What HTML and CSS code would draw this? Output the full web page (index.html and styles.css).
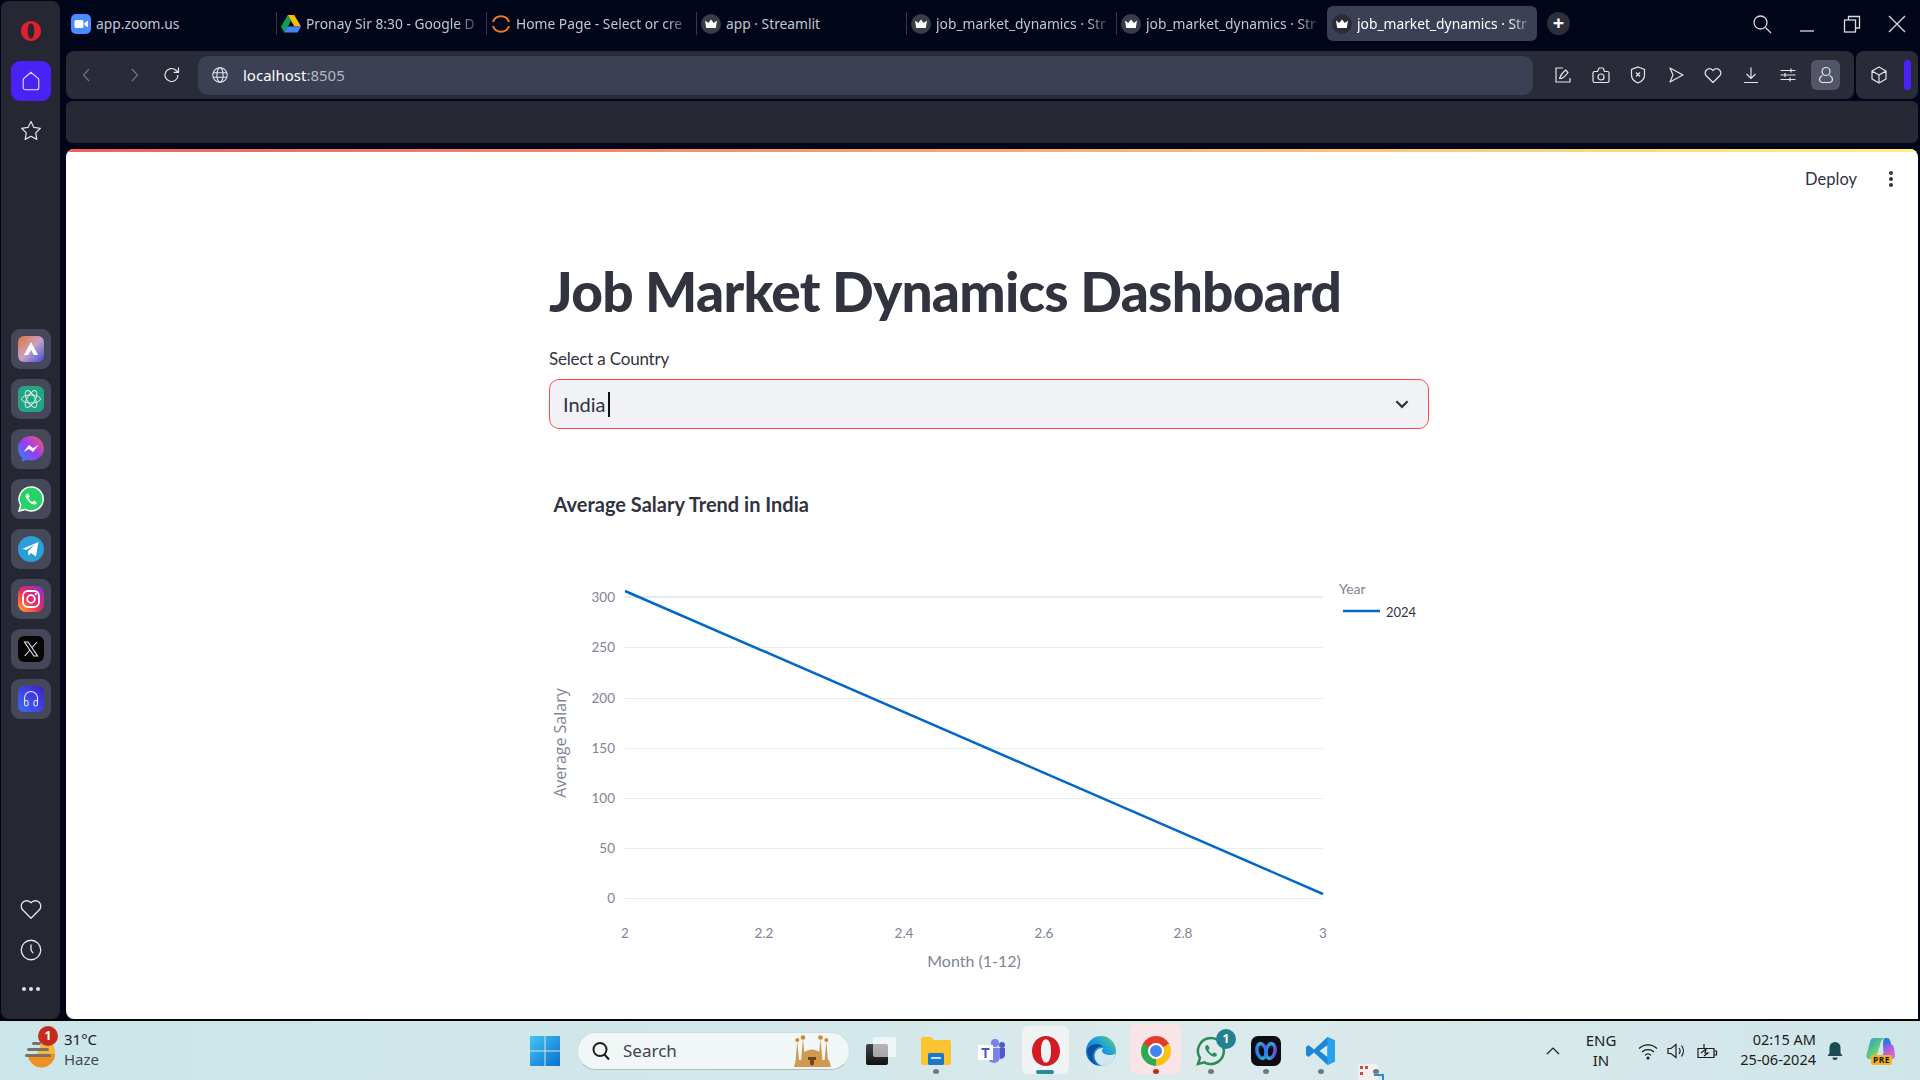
FILE: index.html
```html
<!DOCTYPE html>
<html lang="en">
<head>
    <meta charset="UTF-8">
    <title>job_market_dynamics · Streamlit</title>
    <link rel="stylesheet" href="styles.css">
</head>
<body>
<div class="desktop">
    <div class="window">
        <!-- browser sidebar -->
        <aside class="sidebar">
            <svg class="opera-logo" viewBox="0 0 20 20"><path fill="#e0202f" fill-rule="evenodd" d="M10 0c5.600 0 10 4.400 10 10s-4.400 10-10 10S0 15.600 0 10 4.400 0 10 0zm0 2.600c-2.200 0-3.300 3.300-3.300 7.400s1.100 7.400 3.300 7.400 3.300-3.300 3.300-7.400S12.200 2.600 10 2.600z"/></svg>
            <div class="side-home">
                <svg viewBox="0 0 24 24" class="ico-22"><path d="M12 2.500 20 9.500a2 2 0 0 1 .5 1.400V19a2.500 2.500 0 0 1-2.500 2.500H6A2.500 2.500 0 0 1 3.500 19v-8.100A2 2 0 0 1 4 9.500z"/></svg>
            </div>
            <div class="side-star">
                <svg viewBox="0 0 24 24" class="ico-24"><path d="m12 2.500 2.900 5.900 6.500.9-4.700 4.600 1.100 6.500-5.800-3.100-5.800 3.100 1.100-6.500-4.700-4.600 6.500-.9z" stroke-linejoin="round"/></svg>
            </div>
            <div class="side-apps">
                <div class="app-btn"><svg viewBox="0 0 26 26">
                    <defs><linearGradient id="aria" x1="0" y1="0" x2="1" y2="1"><stop offset="0" stop-color="#e8712f"/><stop offset=".5" stop-color="#c8a2c8"/><stop offset="1" stop-color="#3f4be0"/></linearGradient></defs>
                    <rect width="26" height="26" rx="6" fill="url(#aria)"/><path d="M13 6 20 19h-4l-3-5-3 5H6z" fill="#fff"/></svg></div>
                <div class="app-btn"><svg viewBox="0 0 26 26">
                    <rect width="26" height="26" rx="6" fill="#23a585"/>
                    <g fill="none" stroke="#dff5ee" stroke-width=".9"><ellipse cx="13" cy="13" rx="9.500" ry="4"/><ellipse cx="13" cy="13" rx="9.500" ry="4" transform="rotate(60 13 13)"/><ellipse cx="13" cy="13" rx="9.500" ry="4" transform="rotate(120 13 13)"/></g></svg></div>
                <div class="app-btn"><svg viewBox="0 0 26 26">
                    <defs><linearGradient id="msgr" x1="0" y1="1" x2="1" y2="0"><stop offset="0" stop-color="#1f8bf5"/><stop offset=".5" stop-color="#9a3cf0"/><stop offset="1" stop-color="#f9586b"/></linearGradient></defs>
                    <path d="M13 0C5.700 0 0 5.300 0 12.500c0 3.700 1.500 7 4.100 9.300V26l4-2.200c1.500.4 3.200.7 4.900.7 7.300 0 13-5.300 13-12S20.300 0 13 0z" fill="url(#msgr)"/>
                    <path d="m5.500 16 5.500-7 4 3 5.500-3-5.500 7-4-3z" fill="#fff"/></svg></div>
                <div class="app-btn"><svg viewBox="0 0 26 26">
                    <path d="M13 1a12 12 0 0 0-10.300 18L1 25l6.200-1.600A12 12 0 1 0 13 1z" fill="#25d366" stroke="#fff" stroke-width="1.500"/>
                    <path d="M9.300 7.500c-.8.300-1.800 1.500-1.600 3 .3 2.400 4.800 7.500 8 8 1.600.2 2.900-.8 3.100-1.800.2-.7-2.400-2.200-3-2-.5.200-.8 1.200-1.400 1.200-1.200 0-3.600-2.400-3.800-3.700 0-.6 1-1 1.100-1.500.1-.6-1.500-3.400-2.400-3.200z" fill="#fff"/></svg></div>
                <div class="app-btn"><svg viewBox="0 0 26 26">
                    <circle cx="13" cy="13" r="13" fill="#2a9fd8"/><path d="M4.500 12.800 20.500 6l-2.600 14.500-4.900-3.400-2.500 2.300-.5-4.300 7-6.500-8.800 5.300z" fill="#fff"/></svg></div>
                <div class="app-btn"><svg viewBox="0 0 26 26">
                    <defs><linearGradient id="insta" x1="0" y1="1" x2="1" y2="0"><stop offset="0" stop-color="#fdb32b"/><stop offset=".45" stop-color="#ee2a5b"/><stop offset="1" stop-color="#8a2be2"/></linearGradient></defs>
                    <rect width="26" height="26" rx="8" fill="url(#insta)"/><g fill="none" stroke="#fff" stroke-width="1.800"><rect x="5" y="5" width="16" height="16" rx="5"/><circle cx="13" cy="13" r="3.800"/></g><circle cx="17.800" cy="8.200" r="1.100" fill="#fff"/></svg></div>
                <div class="app-btn"><svg viewBox="0 0 26 26">
                    <rect width="26" height="26" rx="6" fill="#060607"/><path d="M6.500 6h3.600l9.400 14h-3.600zM19 6l-5.300 6M12 14l-5.300 6" fill="none" stroke="#e8e8e8" stroke-width="1.100"/></svg></div>
                <div class="app-btn"><svg viewBox="0 0 26 26">
                    <defs><linearGradient id="music" x1="0" y1="1" x2="1" y2="0"><stop offset="0" stop-color="#3e6cf5"/><stop offset="1" stop-color="#3a1fd0"/></linearGradient></defs>
                    <rect width="26" height="26" rx="6" fill="url(#music)"/><g fill="none" stroke="#e4e6ff" stroke-width="1.100"><path d="M6.500 16v-4a6.500 6.500 0 0 1 13 0v4"/><rect x="6.500" y="14.500" width="3.600" height="5.500" rx="1.800"/><rect x="15.900" y="14.500" width="3.600" height="5.500" rx="1.800"/></g></svg></div>
            </div>
            <div class="side-bottom">
                <svg viewBox="0 0 24 24" class="ico-26"><path d="M12 20.500 4.500 13a5 5 0 0 1 0-7.200 5 5 0 0 1 7 0l.5.500.5-.5a5 5 0 0 1 7 0 5 5 0 0 1 0 7.200z" stroke-linejoin="round"/></svg>
                <svg viewBox="0 0 24 24" class="ico-26"><circle cx="12" cy="12" r="9"/><path d="M12 7v5l2 3"/></svg>
                <div class="side-dots"><i></i><i></i><i></i></div>
            </div>
        </aside>

        <div class="browser">
            <div class="tabstrip">
                <div class="tab first">
                    <svg class="fav" viewBox="0 0 20 20"><rect width="20" height="20" rx="5" fill="#4a8cff"/><rect x="3.500" y="6" width="9" height="8" rx="1.500" fill="#fff"/><path d="m13.500 9 3.500-2.500v7L13.500 11z" fill="#fff"/></svg>
                    <span class="tab-title">app.zoom.us</span>
                </div>
                <div class="tab">
                    <svg class="fav" viewBox="0 0 20 18"><path d="M6.700 0h6.600L20 11.500h-6.600z" fill="#fbbc04"/><path d="M6.700 0 0 11.800l3.300 5.700L10 6z" fill="#0f9d58"/><path d="M3.300 17.500h13.400l3.300-6H6.600z" fill="#4285f4"/></svg>
                    <span class="tab-title fade">Pronay Sir 8:30 - Google D</span>
                </div>
                <div class="tab">
                    <svg class="fav" viewBox="0 0 20 20" fill="none" stroke="#f07a24" stroke-width="2"><path d="M2 8a8.500 8.500 0 0 1 16 0"/><path d="M2 12a8.500 8.500 0 0 0 16 0"/></svg>
                    <span class="tab-title fade">Home Page - Select or cre</span>
                </div>
                <div class="tab">
                    <svg class="fav" viewBox="0 0 20 20"><circle cx="10" cy="10" r="10" fill="#3a3d47"/><path d="m4 6.500 3.200 2.500L10 5.500 12.800 9 16 6.500l-1.200 7.500H5.200z" fill="#fff"/></svg>
                    <span class="tab-title">app · Streamlit</span>
                </div>
                <div class="tab">
                    <svg class="fav" viewBox="0 0 20 20"><circle cx="10" cy="10" r="10" fill="#3a3d47"/><path d="m4 6.500 3.200 2.500L10 5.500 12.800 9 16 6.500l-1.200 7.500H5.200z" fill="#fff"/></svg>
                    <span class="tab-title fade">job_market_dynamics · Str</span>
                </div>
                <div class="tab">
                    <svg class="fav" viewBox="0 0 20 20"><circle cx="10" cy="10" r="10" fill="#3a3d47"/><path d="m4 6.500 3.200 2.500L10 5.500 12.800 9 16 6.500l-1.200 7.500H5.200z" fill="#fff"/></svg>
                    <span class="tab-title fade">job_market_dynamics · Str</span>
                </div>
                <div class="tab active">
                    <svg class="fav" viewBox="0 0 20 20"><circle cx="10" cy="10" r="10" fill="#2a2d38"/><path d="m4 6.500 3.200 2.500L10 5.500 12.800 9 16 6.500l-1.200 7.500H5.200z" fill="#fff"/></svg>
                    <span class="tab-title fade">job_market_dynamics · Str</span>
                </div>
                <div class="new-tab">+</div>
                <div class="win-controls">
                    <svg viewBox="0 0 20 20" class="win-search"><circle cx="8.500" cy="8.500" r="6.500"/><path d="m13.500 13.500 5.500 5.500"/></svg>
                    <svg viewBox="0 0 20 20" class="win-btn"><path d="M3 17h14"/></svg>
                    <svg viewBox="0 0 20 20" class="win-btn"><rect x="2.500" y="6" width="11" height="12"/><path d="M6.500 6V2.500H17.500V14H13.500"/></svg>
                    <svg viewBox="0 0 20 20" class="win-btn"><path d="m2 2 16 16M18 2 2 18"/></svg>
                </div>
            </div>

            <div class="toolbar-row">
                <div class="toolbar">
                    <div class="nav-btn"><svg viewBox="0 0 20 20" class="ico-dim"><path d="M12 4 6.500 10l5.500 6"/></svg></div>
                    <div class="nav-btn forward"><svg viewBox="0 0 20 20" class="ico-dim"><path d="m8 4 5.500 6L8 16"/></svg></div>
                    <div class="reload"><svg viewBox="0 0 20 20" class="ico-20"><path d="M16 10a6.500 6.500 0 1 1-2-4.700l2 1.900"/><path d="M16.500 2.500v4.800h-4.800" stroke-linejoin="round"/></svg></div>
                    <div class="address">
                        <svg viewBox="0 0 20 20" class="ico-18 globe"><circle cx="10" cy="10" r="8"/><ellipse cx="10" cy="10" rx="3.500" ry="8"/><path d="M2.500 7.500h15M2.500 12.500h15"/></svg>
                        <span class="host">localhost</span><span class="port">:8505</span>
                    </div>
                    <div class="tools">
                        <div class="tool"><svg viewBox="0 0 20 20" class="ico-20"><path d="M10 3H3v14h14v-4M6.500 13.500c1-3 3-6 6-8.500l2.500 2.500c-2 3-4 5-6.500 6z" stroke-linejoin="round"/></svg></div>
                        <div class="tool"><svg viewBox="0 0 20 20" class="ico-20"><path d="M3.500 6.500h3l1.500-3.500h4l1.500 3.500h3A1.500 1.500 0 0 1 18 8v8a1.500 1.500 0 0 1-1.500 1.500h-13A1.500 1.500 0 0 1 2 16V8a1.500 1.500 0 0 1 1.500-1.500z"/><circle cx="10" cy="12" r="3"/></svg></div>
                        <div class="tool"><svg viewBox="0 0 20 20" class="ico-20"><path d="M10 2 16.500 4.500V10c0 3.500-2.500 6.500-6.500 8-4-1.500-6.500-4.500-6.500-8V4.500z"/><path d="m8 7.500 4 4M12 7.500l-4 4"/></svg></div>
                        <div class="tool"><svg viewBox="0 0 20 20" class="ico-20"><path d="M4 3 17 10 4 17l3-7z" stroke-linejoin="round"/></svg></div>
                        <div class="tool"><svg viewBox="0 0 20 20" class="ico-20"><path d="M10 17.500 3.500 11a4 4 0 0 1 0-6 4 4 0 0 1 6 0l.5.500.5-.5a4 4 0 0 1 6 0 4 4 0 0 1 0 6z" stroke-linejoin="round"/></svg></div>
                        <div class="tool"><svg viewBox="0 0 20 20" class="ico-20"><path d="M10 2.500V13M5.500 9 10 13.500 14.500 9M3 17.500h14"/></svg></div>
                        <div class="tool"><svg viewBox="0 0 20 20" class="ico-20"><path d="M2.500 5.500h15M2.500 10h15M2.500 14.500h15M13 3.500v4M7 8v4M12 12.500v4"/></svg></div>
                        <div class="profile"><svg viewBox="0 0 20 20" class="ico-20"><circle cx="10" cy="6.500" r="4"/><path d="M6.500 10.500c-2 1-3 2.500-3 4s1.300 3 3 3h7c1.700 0 3-1.500 3-3s-1-3-3-4"/></svg></div>
                    </div>
                </div>
                <div class="ext-box">
                    <svg viewBox="0 0 20 20" class="ico-20"><path d="M10 2 17 6v8l-7 4-7-4V6zM3 6l7 4 7-4M10 10v8" stroke-linejoin="round"/></svg>
                    <div class="ext-bar"></div>
                </div>
            </div>

            <div class="bookmarks"></div>

            <!-- the streamlit page -->
            <main class="page">
                <div class="page-deco"></div>
                <div class="page-head">
                    <span class="deploy">Deploy</span>
                    <div class="kebab"><i></i><i></i><i></i></div>
                </div>
                <div class="block">
                    <h1 class="title">Job Market Dynamics Dashboard</h1>
                    <label class="field-label">Select a Country</label>
                    <div class="select">
                        <span class="select-value">India</span><span class="caret"></span>
                        <svg class="select-arrow" viewBox="0 0 16 16"><path d="m3 5.500 5 5 5-5"/></svg>
                    </div>
                    <svg class="chart" viewBox="549 490 880 490">
                        <text class="chart-title" x="553.500" y="512">Average Salary Trend in India</text>
                        <g class="grid">
                            <path class="grid-top" d="M625 597H1323"/>
                            <path d="M625 647.500H1323M625 698.500H1323M625 748.500H1323M625 798.500H1323M625 848.500H1323M625 898.500H1323"/>
                        </g>
                        <path class="series" d="M625 591 1323 894"/>
                        <g class="ticks y-ticks">
                            <text x="615" y="602">300</text>
                            <text x="615" y="652">250</text>
                            <text x="615" y="703">200</text>
                            <text x="615" y="753">150</text>
                            <text x="615" y="803">100</text>
                            <text x="615" y="853">50</text>
                            <text x="615" y="903">0</text>
                        </g>
                        <g class="ticks x-ticks">
                            <text x="625" y="938">2</text>
                            <text x="764" y="938">2.2</text>
                            <text x="904" y="938">2.4</text>
                            <text x="1044" y="938">2.6</text>
                            <text x="1183" y="938">2.8</text>
                            <text x="1323" y="938">3</text>
                        </g>
                        <text class="axis-x" x="974" y="967">Month (1-12)</text>
                        <text class="axis-y" transform="translate(566 743) rotate(-90)">Average Salary</text>
                        <text class="legend-title" x="1339" y="594">Year</text>
                        <path class="legend-line" d="M1343 611H1380"/>
                        <text class="legend-text" x="1386" y="617">2024</text>
                    </svg>
                </div>
            </main>
        </div>
    </div>

    <!-- windows taskbar -->
    <footer class="taskbar">
        <div class="weather">
            <div class="weather-icon">
                <svg viewBox="0 0 30 34" width="30" height="34"><path d="M3 20h27a13.500 13.500 0 0 1-27 0z" fill="#ef8f22"/><path d="M18 6a12 12 0 0 1 12 14H12z" fill="#f5b63a"/><g fill="#75726a"><rect x="7" y="8" width="9" height="3" rx="1.500"/><rect x="2" y="14" width="22" height="3" rx="1.500"/><rect x="0" y="20" width="26" height="3" rx="1.500"/></g></svg>
                <span class="weather-badge">1</span>
            </div>
            <div class="weather-text"><div>31°C</div><div class="weather-sub">Haze</div></div>
        </div>
        <div class="tb-item">
            <svg viewBox="0 0 30 30" width="30" height="30"><defs><linearGradient id="win" x1="0" y1="0" x2="1" y2="1"><stop offset="0" stop-color="#43c5f5"/><stop offset="1" stop-color="#0a6fd0"/></linearGradient></defs><path d="M0 0h14.500v14.500H0zM15.500 0H30v14.500H15.500zM0 15.500h14.500V30H0zM15.500 15.500H30V30H15.500z" fill="url(#win)"/></svg>
        </div>
        <div class="search">
            <svg viewBox="0 0 20 20" width="20" height="20" class="search-q"><circle cx="9" cy="8.500" r="6.500"/><path d="m13.500 13.500 4.500 5"/></svg>
            <span class="search-text">Search</span>
            <svg class="search-pic" viewBox="0 0 37 32" width="37" height="32"><g fill="#cf9a50"><path d="M1 32 3.300 6 5.600 32zM6.500 32 9 3l2.500 29zM24 32l2.500-29L29 32zM30 32l2.300-26L34.600 32z"/><path d="M10 32V17q8-5 16 0v15zM0 32l2-7h33l2 7z"/></g><g fill="#c98a3a"><circle cx="3.300" cy="5" r="2"/><circle cx="9" cy="2.500" r="2.300"/><circle cx="26.500" cy="2.500" r="2.300"/><circle cx="32.300" cy="5" r="2"/></g><path d="M14 22h8v3h-8z" fill="#6b4420"/><ellipse cx="18" cy="27" rx="2" ry="3.500" fill="#6b4420"/></svg>
        </div>
        <div class="tb-item taskview"><div class="tv-front"></div><div class="tv-back"></div></div>
        <div class="tb-item"><svg viewBox="0 0 30 28" width="30" height="28"><path d="M0 2a2 2 0 0 1 2-2h8l3 3h15a2 2 0 0 1 2 2v21a2 2 0 0 1-2 2H2a2 2 0 0 1-2-2z" fill="#fcc42f"/><rect x="7" y="16" width="16" height="12" rx="1.500" fill="#1d78c9"/><rect x="10" y="20" width="10" height="2" fill="#bfe0f7"/></svg><i class="pip"></i></div>
        <div class="tb-item"><svg viewBox="0 0 28 26" width="28" height="26"><circle cx="18" cy="5" r="4" fill="#7b83eb"/><circle cx="25" cy="7" r="3" fill="#5059c9"/><path d="M11 10h12v9a6 6 0 0 1-12 0z" fill="#7b83eb"/><path d="M23 10h5v7a4 4 0 0 1-5 3.800z" fill="#5059c9"/><rect x="1" y="7" width="15" height="15" fill="#fff"/><path d="M4.500 10h8v2h-3v8h-2v-8h-3z" fill="#4b53bc"/></svg></div>
        <div class="tb-item tile-open"><svg viewBox="0 0 20 20" width="28" height="30" preserveAspectRatio="none"><path fill="#d41a26" fill-rule="evenodd" d="M10 0c5.600 0 10 4.400 10 10s-4.400 10-10 10S0 15.600 0 10 4.400 0 10 0zm0 2.200c-2.400 0-3.600 3.400-3.600 7.800s1.200 7.800 3.600 7.800 3.600-3.400 3.600-7.800S12.400 2.200 10 2.200z"/></svg><i class="pip-bar"></i></div>
        <div class="tb-item"><svg viewBox="0 0 30 30" width="30" height="30"><defs><linearGradient id="edge" x1="0" y1="1" x2="1" y2="0"><stop offset="0" stop-color="#0c5fb8"/><stop offset=".6" stop-color="#1d9ce0"/><stop offset="1" stop-color="#5fd97a"/></linearGradient></defs><circle cx="15" cy="15" r="15" fill="url(#edge)"/><path d="M29.500 17c-1 1.500-3 2-5.500 2-4 0-8-1.500-8-4.500 0-1 .5-2 1.500-2.500-5-.5-9 3-9 8 0 4 2 7 6 9.500 3 .5 6 0 9-2 3-2 5.500-5.500 6-10.500z" fill="#dcebf0" opacity=".95"/><path d="M12 29.500C7 26 6 22 7 18c1-5 5-8 10-7.500C12 6 5 8 1.500 13 .3 20 5 28 12 29.500z" fill="#0b4f9e"/></svg></div>
        <div class="tb-item tile-pink"><div class="chrome"><div class="chrome-eye"></div></div><i class="pip red"></i></div>
        <div class="tb-item">
            <svg viewBox="0 0 30 30" width="30" height="30"><path d="M15 2a13 13 0 0 0-11 20L2 28l6.400-1.700A13 13 0 1 0 15 2z" fill="none" stroke="#2e8b57" stroke-width="2.500"/><path d="M11 9c-1 .3-2 1.500-1.800 3.200.3 2.600 5.200 8 8.600 8.500 1.700.2 3-.8 3.200-2 .2-.7-2.500-2.300-3.200-2.100-.5.200-.8 1.200-1.400 1.200-1.300 0-3.800-2.500-4-4 0-.6 1-1 1.200-1.600C13.700 11.600 12 8.800 11 9z" fill="#2e8b57"/></svg>
            <span class="wa-badge">1</span><i class="pip"></i>
        </div>
        <div class="tb-item"><svg viewBox="0 0 30 30" width="30" height="30"><defs><linearGradient id="wave" x1="0" y1="0" x2="1" y2="0"><stop offset="0" stop-color="#2a7af0"/><stop offset=".5" stop-color="#22b8c8"/><stop offset="1" stop-color="#6a4be8"/></linearGradient></defs><rect width="30" height="30" rx="7" fill="#0d0d12"/><g fill="none" stroke="url(#wave)" stroke-width="3.500"><ellipse cx="10.500" cy="15" rx="4.500" ry="7.500" transform="rotate(-12 10.500 15)"/><ellipse cx="19.500" cy="15" rx="4.500" ry="7.500" transform="rotate(12 19.500 15)"/></g></svg><i class="pip"></i></div>
        <div class="tb-item"><svg viewBox="0 0 30 30" width="30" height="30"><path d="M21.500 1 29 4.500v21L21.500 29 8 16.500 2.500 21 0 19V11l2.500-2L8 13.500zm0 8L13.500 15l8 6z" fill="#1a86d8"/><path d="M21.500 1 29 4.500v21L21.500 29z" fill="#27a3ee"/></svg><i class="pip"></i></div>
        <div class="tb-item tb-extra"><svg viewBox="0 0 30 17" width="30" height="17"><rect x="1" y="1" width="20" height="16" rx="2" fill="#f3f1ee"/><g fill="#cf4a3a"><rect x="3" y="3" width="3" height="3"/><rect x="8" y="3" width="3" height="3"/><rect x="3" y="9" width="3" height="3"/></g><path d="M17 12h9v5" fill="none" stroke="#2a8ad4" stroke-width="2"/></svg><i class="pip"></i></div>

        <div class="tray">
            <div class="tray-chev"><svg viewBox="0 0 14 10" width="14" height="10"><path d="M1 8l6-6 6 6"/></svg></div>
            <div class="tray-lang"><div>ENG</div><div>IN</div></div>
            <div class="tray-ico wifi"><svg viewBox="0 0 20 18" width="20" height="18"><path d="M1 6.500a13 13 0 0 1 18 0M4 10a9 9 0 0 1 12 0M7 13.300a4.500 4.500 0 0 1 6 0"/><circle cx="10" cy="16" r="1" fill="#1c1c1c"/></svg></div>
            <div class="tray-ico speaker"><svg viewBox="0 0 20 18" width="20" height="18"><path d="M2 6.500h3L10 2.500v13L5 11.500H2zM13 6a5 5 0 0 1 0 6M15.500 3.500a9 9 0 0 1 0 11"/></svg></div>
            <div class="tray-ico battery"><svg viewBox="0 0 22 18" width="22" height="18"><path d="M2 6.500h16v9H2zM18 9h2.500v4H18M8 2v5M5 11l5-4-1 4h3l-4 3"/></svg></div>
            <div class="tray-clock"><div>02:15 AM</div><div>25-06-2024</div></div>
            <div class="tray-bell"><svg viewBox="0 0 16 20" width="16" height="20"><path d="M8 1a5.500 5.500 0 0 1 5.500 5.500V12l2 3H.5l2-3V6.500A5.500 5.500 0 0 1 8 1zM5.500 16.500h5a2.500 2.500 0 0 1-5 0z" fill="#1c4a55"/></svg></div>
            <div class="tray-copilot">
                <svg viewBox="0 0 29 28" width="29" height="28"><defs><linearGradient id="cop-l" x1="0" y1="0" x2="1" y2="1"><stop offset="0" stop-color="#2d8fe8"/><stop offset=".5" stop-color="#5ccb7e"/><stop offset="1" stop-color="#f2d34a"/></linearGradient><linearGradient id="cop-r" x1="0" y1="0" x2="1" y2="1"><stop offset="0" stop-color="#2f6fe0"/><stop offset=".5" stop-color="#b35ee0"/><stop offset="1" stop-color="#ef6fb4"/></linearGradient></defs><path d="M8 1h11c-3 1-4 3-5 7l-3 10c-1 3-2 4-6 4H3c-2 0-3-2-2.500-4L4 5c.6-2.500 2-4 4-4z" fill="url(#cop-l)"/><path d="M17 7h7c2 0 3.500 1.500 4 4l1 7c.3 2-1 4-3 4H13c3-1 3.500-3 4.500-6z" fill="url(#cop-r)"/><path d="M19 1h2c2 0 3 1.500 3.500 4l.5 2h-8c0-3 .5-5 2-6z" fill="#2a7ae0"/></svg>
                <span class="pre">PRE</span>
            </div>
        </div>
    </footer>
</div>
</body>
</html>
```

FILE: styles.css
```css
* {
    box-sizing: border-box;
}
html, body {
    margin: 0;
    padding: 0;
}
body {
    width: 1920px;
    height: 1080px;
    overflow: hidden;
    font-family: "Noto Sans", sans-serif;
}
.desktop {
    display: flex;
    flex-direction: column;
    height: 1080px;
}
.window {
    display: flex;
    height: 1021px;
    padding-right: 2px;
    background: #02061a;
    border-bottom: 2px solid #000;
}

/* icon defaults */
svg {
    display: block;
    flex: none;
}
.ico-26, .ico-24, .ico-22, .ico-20, .ico-18, .ico-dim {
    fill: none;
    stroke: #e4e6ec;
    stroke-width: 1.2;
}
.ico-26 { width: 26px; height: 26px; }
.ico-24 { width: 24px; height: 24px; }
.ico-22 { width: 22px; height: 22px; }
.ico-20 { width: 20px; height: 20px; }
.ico-18 { width: 18px; height: 18px; }
.ico-dim { width: 20px; height: 20px; stroke: #6e7282; }

/* sidebar */
.sidebar {
    width: 59px;
    margin: 1px 6px 0 1px;
    background: #252833;
    border-radius: 8px;
    display: flex;
    flex-direction: column;
    align-items: center;
    padding-left: 1px;
}
.opera-logo {
    width: 20px;
    height: 20px;
    margin-top: 20px;
}
.side-home {
    width: 40px;
    height: 40px;
    margin-top: 20px;
    border-radius: 9px;
    background: #4a22f5;
    display: flex;
    align-items: center;
    justify-content: center;
}
.side-star {
    margin-top: 18px;
}
.side-apps {
    margin-top: 186px;
    display: flex;
    flex-direction: column;
    gap: 10px;
}
.app-btn {
    width: 40px;
    height: 40px;
    border-radius: 9px;
    background: #454859;
    display: flex;
    align-items: center;
    justify-content: center;
}
.app-btn svg {
    width: 26px;
    height: 26px;
}
.side-bottom {
    margin-top: auto;
    padding-bottom: 28px;
    display: flex;
    flex-direction: column;
    align-items: center;
    gap: 15px;
}
.side-dots {
    display: flex;
    gap: 3px;
    margin-top: 9px;
}
.side-dots i {
    width: 4px;
    height: 4px;
    border-radius: 50%;
    background: #dfe1e8;
}

/* tabs */
.browser {
    flex: 1;
    min-width: 0;
    display: flex;
    flex-direction: column;
}
.tabstrip {
    height: 51px;
    display: flex;
    align-items: flex-start;
    padding-top: 6px;
}
.tab {
    width: 210px;
    height: 35px;
    flex: none;
    padding: 0 2px 0 5px;
    display: flex;
    align-items: center;
    gap: 5px;
    position: relative;
    color: #c3c6cf;
    font-size: 13.8px;
}
.tab::before {
    content: "";
    position: absolute;
    left: 0;
    top: 6px;
    bottom: 6px;
    width: 1px;
    background: #33384a;
}
.tab.first::before,
.tab.active::before {
    display: none;
}
.tab.active {
    background: #3c4054;
    border-radius: 6px;
    color: #fff;
    margin-left: 1px;
}
.fav {
    width: 20px;
    height: 20px;
}
.tab-title {
    flex: 1;
    min-width: 0;
    white-space: nowrap;
}
.tab-title.fade {
    -webkit-mask-image: linear-gradient(to right, #000 85%, transparent);
    mask-image: linear-gradient(to right, #000 85%, transparent);
}
.new-tab {
    width: 23px;
    height: 23px;
    margin: 6px 0 0 10px;
    border-radius: 50%;
    background: #2b2e3b;
    color: #fff;
    font-size: 20px;
    font-weight: 700;
    line-height: 22px;
    text-align: center;
}
.win-controls {
    margin-left: auto;
    display: flex;
    align-items: center;
    height: 36px;
    padding-right: 11px;
}
.win-controls svg {
    fill: none;
    stroke: #d8dae0;
    stroke-width: 1.3;
    width: 20px;
    height: 20px;
}
.win-search {
    margin-right: 25px;
}
.win-btn {
    margin-right: 25px;
}
.win-btn:last-child {
    margin-right: 0;
}

/* toolbar */
.toolbar-row {
    display: flex;
    gap: 2px;
    height: 48px;
}
.toolbar {
    flex: 1;
    min-width: 0;
    display: flex;
    align-items: center;
    background: #292c38;
    border-radius: 8px;
}
.nav-btn {
    width: 42px;
    display: flex;
    justify-content: center;
}
.nav-btn.forward {
    margin-left: 5px;
}
.reload {
    width: 26px;
    margin-left: 4px;
    display: flex;
    justify-content: center;
}
.address {
    flex: 1;
    height: 39px;
    margin-left: 13px;
    border-radius: 10px;
    background: #3c4054;
    display: flex;
    align-items: center;
    padding-left: 13px;
    font-size: 15px;
}
.globe {
    margin-right: 14px;
}
.host {
    color: #fff;
}
.port {
    color: #b4b7c4;
}
.tools {
    display: flex;
    align-items: center;
    padding: 0 14px 0 12px;
}
.tool {
    width: 37.5px;
    display: flex;
    justify-content: center;
}
.profile {
    width: 29px;
    height: 30px;
    margin-left: 4px;
    border-radius: 6px;
    background: #525668;
    display: flex;
    align-items: center;
    justify-content: center;
}
.ext-box {
    width: 62px;
    background: #292c38;
    border-radius: 8px;
    display: flex;
    align-items: center;
    padding-left: 13px;
}
.ext-bar {
    width: 7px;
    height: 30px;
    margin-left: 15px;
    border-radius: 4px;
    background: #4a22f5;
}
.bookmarks {
    height: 42px;
    margin-top: 2px;
    background: #262934;
    border-radius: 6px;
}

/* page */
.page {
    flex: 1;
    min-height: 0;
    margin-top: 6px;
    background: #fff;
    border-radius: 8px 8px 0 8px;
    overflow: hidden;
    color: #31333f;
    font-family: "Lato", sans-serif;
}
.page-deco {
    height: 3px;
    background: linear-gradient(90deg, #f0605c, #fff27f);
}
.page-head {
    height: 59px;
    display: flex;
    align-items: center;
    justify-content: flex-end;
    gap: 32px;
    padding: 0 25px 5px 0;
    font-size: 16.5px;
}
.kebab {
    display: flex;
    flex-direction: column;
    gap: 2px;
}
.kebab i {
    width: 4px;
    height: 4px;
    border-radius: 50%;
    background: #31333f;
}
.block {
    width: 880px;
    margin-left: 483px;
}
.title {
    margin: 0;
    padding-top: 45px;
    font-size: 55px;
    line-height: 70px;
    font-weight: 900;
    letter-spacing: -.75px;
    white-space: nowrap;
}
.field-label {
    display: block;
    margin-top: 21px;
    margin-bottom: 8px;
    font-size: 17px;
    letter-spacing: -.2px;
    line-height: 24px;
}
.select {
    height: 50px;
    display: flex;
    align-items: center;
    padding: 0 13px;
    background: #f0f2f6;
    border: 1px solid #ff4b4b;
    border-radius: 10px;
    font-size: 20px;
}
.caret {
    width: 2px;
    height: 25px;
    margin-left: 2px;
    background: #111;
}
.select-arrow {
    width: 18px;
    height: 18px;
    margin-left: auto;
    margin-right: 4px;
    fill: none;
    stroke: #31333f;
    stroke-width: 2;
}

/* chart */
.chart {
    width: 880px;
    height: 490px;
    margin-top: 61px;
    font-family: "Lato", sans-serif;
}
.chart-title {
    font-size: 20px;
    font-weight: 700;
    fill: #31333f;
}
.grid path {
    stroke: #e6eaf1;
    stroke-width: 1;
    fill: none;
}
.grid .grid-top {
    stroke-width: 2;
}
.series {
    stroke: #0068c9;
    stroke-width: 2.5;
    fill: none;
}
.ticks text {
    font-size: 13.5px;
    fill: #808495;
}
.y-ticks text {
    text-anchor: end;
}
.x-ticks text {
    text-anchor: middle;
}
.axis-x {
    font-size: 16px;
    fill: #808495;
    text-anchor: middle;
}
.axis-y {
    font-family: "Open Sans", sans-serif;
    font-size: 16px;
    fill: #808495;
    text-anchor: middle;
}
.legend-title {
    font-size: 14px;
    fill: #808495;
}
.legend-line {
    stroke: #0068c9;
    stroke-width: 2.5;
}
.legend-text {
    font-size: 13px;
    fill: #31333f;
}

/* taskbar */
.taskbar {
    flex: 1;
    display: flex;
    align-items: center;
    background: linear-gradient(90deg, #cbe6e9 0%, #d3e8ea 45%, #dceaec 62%, #cfe6e9 100%);
    color: #1c1c1c;
    font-size: 15px;
}
.weather {
    width: 517px;
    flex: none;
    display: flex;
    align-items: center;
    padding-left: 25px;
}
.weather-icon {
    position: relative;
    width: 30px;
    height: 34px;
    margin-right: 9px;
}
.weather-badge, .wa-badge {
    position: absolute;
    width: 20px;
    height: 20px;
    border-radius: 50%;
    color: #fff;
    font-size: 12px;
    font-weight: 700;
    line-height: 20px;
    text-align: center;
}
.weather-badge {
    top: -8px;
    right: -3px;
    background: #c42b1c;
}
.weather-text {
    line-height: 20px;
    padding-bottom: 3px;
}
.weather-sub {
    color: #404a4c;
}
.tb-item {
    position: relative;
    width: 55px;
    height: 59px;
    flex: none;
    display: flex;
    align-items: center;
    justify-content: center;
}
.tb-item > svg, .chrome {
    position: relative;
}
.tile-open::before, .tile-pink::before {
    content: "";
    position: absolute;
    inset: 5px 4px 6px 4px;
    border-radius: 6px;
    background: #eff3f3;
}
.tile-pink::before {
    background: #f9e4e7;
    inset: 3px 2px 6px 2px;
}
.pip {
    position: absolute;
    left: 25px;
    bottom: 6px;
    width: 6px;
    height: 5px;
    border-radius: 50%;
    background: #6e7a7d;
}
.pip.red {
    background: #c42b1c;
}
.pip-bar {
    position: absolute;
    left: 18px;
    bottom: 6px;
    width: 18px;
    height: 4px;
    border-radius: 2px;
    background: #2a8a9a;
}
.search {
    width: 273px;
    height: 38px;
    flex: none;
    margin: 0 3px 0 5px;
    padding: 0 18px 0 13px;
    display: flex;
    align-items: center;
    border-radius: 19px;
    background: #f1f6f6;
    border: 1px solid #d3dcdd;
    border-bottom-color: #b0bcbe;
}
.search-q {
    fill: none;
    stroke: #1c1c1c;
    stroke-width: 2;
}
.search-text {
    margin-left: 12px;
    font-size: 17px;
    color: #404448;
}
.search-pic {
    margin-left: auto;
}
.tv-front {
    position: absolute;
    left: 13px;
    top: 23px;
    width: 22px;
    height: 21px;
    background: linear-gradient(#444, #111);
    border-radius: 2px;
}
.tv-back {
    position: absolute;
    left: 20px;
    top: 16px;
    width: 23px;
    height: 20px;
    background: rgba(255, 255, 255, .6);
    border-radius: 2px;
}
.chrome {
    width: 30px;
    height: 30px;
    border-radius: 50%;
    background: conic-gradient(#e33b2e 0 60deg, #fbc116 60deg 180deg, #2fa84f 180deg 300deg, #e33b2e 300deg);
    display: flex;
    align-items: center;
    justify-content: center;
}
.chrome-eye {
    width: 12px;
    height: 12px;
    border-radius: 50%;
    background: #3f86f3;
    border: 2.5px solid #fff;
    box-sizing: content-box;
}
.wa-badge {
    top: 8px;
    right: 2px;
    background: #22808f;
}
.tb-extra > svg {
    align-self: flex-end;
    margin-left: -8px;
}
.tray {
    margin-left: auto;
    display: flex;
    align-items: center;
    padding-right: 10px;
}
.tray svg {
    fill: none;
    stroke: #1c1c1c;
    stroke-width: 1.2;
}
.tray-chev {
    width: 26px;
    display: flex;
    justify-content: center;
}
.tray-lang {
    width: 70px;
    text-align: center;
    line-height: 20px;
    padding-bottom: 2px;
}
.tray-ico {
    display: flex;
    justify-content: center;
}
.wifi { width: 24px; }
.speaker { width: 32px; }
.battery { width: 30px; }
.tray-clock {
    width: 94px;
    text-align: right;
    line-height: 20px;
    font-size: 14.5px;
    white-space: nowrap;
    padding-bottom: 3px;
}
.tray-bell {
    width: 38px;
    display: flex;
    justify-content: center;
}
.tray .tray-bell svg {
    stroke: none;
}
.tray-copilot {
    position: relative;
    width: 56px;
    display: flex;
    justify-content: center;
    padding-right: 4px;
}
.tray .tray-copilot svg {
    stroke: none;
}
.pre {
    position: absolute;
    left: 17px;
    bottom: 0;
    padding: 0 2px;
    background: #f0b429;
    border-radius: 2px;
    font-size: 8.5px;
    font-weight: 700;
    line-height: 10px;
    letter-spacing: .4px;
}
```
